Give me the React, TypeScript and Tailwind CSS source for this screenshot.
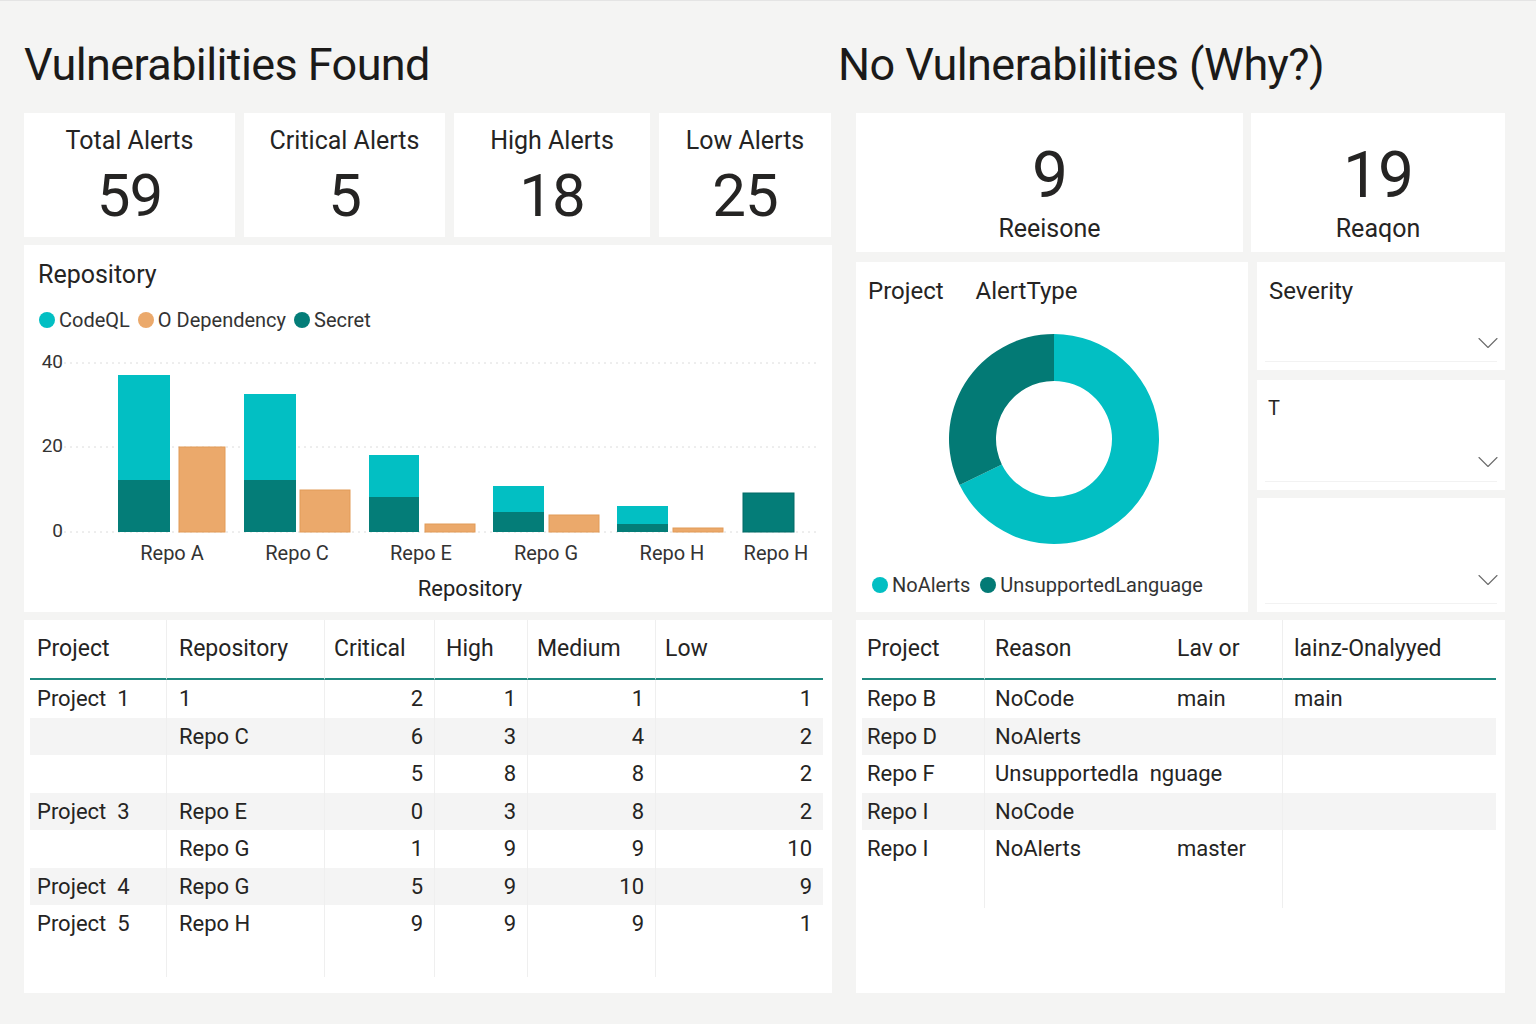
import { ChevronDown } from "lucide-react";

// ── Palette ─────────────────────────────────────────────────────────────────

const TEAL = "#02bfc3";
const DARK = "#047d78";
const ORANGE = "#eba96b";

// ── KPI cards ───────────────────────────────────────────────────────────────

function AlertCard({ label, value, width }: { label: string; value: string; width: string }) {
  return (
    <div className={`${width} bg-white flex flex-col items-center pt-[13px]`}>
      <span className="text-[25px] leading-[30px] text-[#252423]">{label}</span>
      <span className="text-[60px] leading-[64px] tracking-[-1px] text-[#252423] mt-[8px]">{value}</span>
    </div>
  );
}

function ReasonCard({ label, value, width }: { label: string; value: string; width: string }) {
  return (
    <div className={`${width} bg-white flex flex-col items-center pt-[29px]`}>
      <span className="text-[64px] leading-[68px] tracking-[-1px] text-[#252423]">{value}</span>
      <span className="text-[25px] leading-[30px] text-[#252423] mt-[4px]">{label}</span>
    </div>
  );
}

// ── Bar chart ───────────────────────────────────────────────────────────────

type Bar = {
  label: string;
  cx: number;
  teal?: { x: number; w: number; top: number; split: number };
  orange?: { x: number; w: number; top: number };
  dark?: { x: number; w: number; top: number };
};

const BASE = 185;

const bars: Bar[] = [
  { label: "Repo A", cx: 148, teal: { x: 94, w: 52, top: 28, split: 133 }, orange: { x: 155, w: 46, top: 100 } },
  { label: "Repo C", cx: 273, teal: { x: 220, w: 52, top: 47, split: 133 }, orange: { x: 276, w: 50, top: 143 } },
  { label: "Repo E", cx: 397, teal: { x: 345, w: 50, top: 108, split: 150 }, orange: { x: 401, w: 50, top: 177 } },
  { label: "Repo G", cx: 522, teal: { x: 469, w: 51, top: 139, split: 165 }, orange: { x: 525, w: 50, top: 168 } },
  { label: "Repo H", cx: 648, teal: { x: 593, w: 51, top: 159, split: 177 }, orange: { x: 649, w: 50, top: 181 } },
  { label: "Repo H", cx: 752, dark: { x: 719, w: 51, top: 146 } },
];

function RepoChart() {
  return (
    <svg width={808} height={262} className="block">
      {[
        { y: 16, t: "40" },
        { y: 100, t: "20" },
        { y: 185, t: "0" },
      ].map((g) => (
        <g key={g.t}>
          <line x1={34} x2={796} y1={g.y} y2={g.y} stroke="#dcdcdc" strokeDasharray="2 4" />
          <text x={39} y={g.y} textAnchor="end" dominantBaseline="middle" fontSize={19} fill="#333">
            {g.t}
          </text>
        </g>
      ))}
      {bars.map((b, i) => (
        <g key={i}>
          {b.teal && (
            <>
              <rect x={b.teal.x} y={b.teal.top} width={b.teal.w} height={b.teal.split - b.teal.top} fill={TEAL} />
              <rect x={b.teal.x} y={b.teal.split} width={b.teal.w} height={BASE - b.teal.split} fill={DARK} />
            </>
          )}
          {b.orange && (
            <rect
              x={b.orange.x}
              y={b.orange.top}
              width={b.orange.w}
              height={BASE - b.orange.top}
              fill={ORANGE}
              stroke="#e29b58"
              strokeWidth={1}
            />
          )}
          {b.dark && (
            <rect x={b.dark.x} y={b.dark.top} width={b.dark.w} height={BASE - b.dark.top} fill={DARK} stroke="#036b67" />
          )}
          <text x={b.cx} y={208} textAnchor="middle" dominantBaseline="middle" fontSize={20} fill="#333">
            {b.label}
          </text>
        </g>
      ))}
      <text x={446} y={243} textAnchor="middle" dominantBaseline="middle" fontSize={22} fill="#222">
        Repository
      </text>
    </svg>
  );
}

// ── Donut ───────────────────────────────────────────────────────────────────

function arc(cx: number, cy: number, r0: number, r1: number, a0: number, a1: number) {
  const rad = (a: number) => (a * Math.PI) / 180;
  const p = (a: number, r: number) => [cx + r * Math.sin(rad(a)), cy - r * Math.cos(rad(a))];
  const large = a1 - a0 > 180 ? 1 : 0;
  const [x0, y0] = p(a0, r1);
  const [x1, y1] = p(a1, r1);
  const [x2, y2] = p(a1, r0);
  const [x3, y3] = p(a0, r0);
  return `M${x0} ${y0} A${r1} ${r1} 0 ${large} 1 ${x1} ${y1} L${x2} ${y2} A${r0} ${r0} 0 ${large} 0 ${x3} ${y3} Z`;
}

function Donut() {
  return (
    <svg width={392} height={240} className="block">
      <path d={arc(198, 117, 58, 105, 0, 244)} fill={TEAL} />
      <path d={arc(198, 117, 58, 105, 244, 360)} fill="#037a75" />
    </svg>
  );
}

// ── Slicer ──────────────────────────────────────────────────────────────────

function Slicer({ title, height, small, chevronBottom }: { title?: string; height: string; small?: boolean; chevronBottom: string }) {
  return (
    <div className={`${height} bg-white relative`}>
      {title && (
        <div className={small ? "pl-[11px] pt-[16px] text-[20px] leading-[24px] text-[#252423]" : "pl-[12px] pt-[14px] text-[24px] leading-[30px] text-[#252423]"}>
          {title}
        </div>
      )}
      <ChevronDown className={`absolute right-[-1px] ${chevronBottom} w-[36px] h-[36px] text-[#6b6b6b]`} strokeWidth={0.75} />
      <div className="absolute left-[8px] right-[8px] bottom-[8px] h-px bg-[#f2f2f2]" />
    </div>
  );
}

// ── Tables ──────────────────────────────────────────────────────────────────

const alertRows: (string | number)[][] = [
  ["Project  1", "1", 2, 1, 1, 1],
  ["", "Repo C", 6, 3, 4, 2],
  ["", "", 5, 8, 8, 2],
  ["Project  3", "Repo E", 0, 3, 8, 2],
  ["", "Repo G", 1, 9, 9, 10],
  ["Project  4", "Repo G", 5, 9, 10, 9],
  ["Project  5", "Repo H", 9, 9, 9, 1],
];

const alertHeaders = ["Project", "Repository", "Critical", "High", "Medium", "Low"];
const headerPad = ["pl-[7px]", "pl-[12px]", "pl-[9px]", "pl-[11px]", "pl-[9px]", "pl-[9px]"];

function AlertTable() {
  const divider = (c: number) => (c < 5 ? "border-r border-[#efefef]" : "");
  return (
    <div className="grid grid-cols-[137px_158px_110px_93px_128px_167px] text-[#252423]">
      {alertHeaders.map((h, c) => (
        <div key={h} className={`h-[60px] flex items-center text-[23px] border-b-2 border-b-[#1f8a80] ${headerPad[c]} ${divider(c)}`}>
          {h}
        </div>
      ))}
      {alertRows.map((row, r) =>
        row.map((v, c) => (
          <div
            key={`${r}-${c}`}
            className={`h-[37.5px] flex items-center text-[22px] whitespace-pre ${r % 2 === 1 ? "bg-[#f4f4f4]" : ""} ${
              c < 2 ? headerPad[c] : "justify-end pr-[11px]"
            } ${divider(c)}`}
          >
            {v}
          </div>
        )),
      )}
      {alertHeaders.map((h, c) => (
        <div key={`f-${h}`} className={`h-[34px] ${divider(c)}`} />
      ))}
    </div>
  );
}

function ReasonTable() {
  const cell = "h-[37.5px] flex items-center text-[22px] whitespace-pre";
  const rows = [
    ["Repo B", "NoCode", "main", "main"],
    ["Repo D", "NoAlerts", "", ""],
    ["Repo F", "Unsupportedla  nguage", null, ""],
    ["Repo I", "NoCode", "", ""],
    ["Repo I", "NoAlerts", "master", ""],
  ];
  return (
    <div className="grid grid-cols-[123px_182px_116px_213px] text-[#252423]">
      <div className="h-[60px] flex items-center text-[23px] pl-[5px] border-b-2 border-b-[#1f8a80] border-r border-r-[#efefef]">Project</div>
      <div className="h-[60px] flex items-center text-[23px] pl-[10px] border-b-2 border-b-[#1f8a80]">Reason</div>
      <div className="h-[60px] flex items-center text-[23px] pl-[10px] border-b-2 border-b-[#1f8a80] border-r border-r-[#efefef]">Lav or</div>
      <div className="h-[60px] flex items-center text-[23px] pl-[11px] border-b-2 border-b-[#1f8a80]">lainz-Onalyyed</div>
      {rows.map((row, r) => {
        const bg = r % 2 === 1 ? "bg-[#f4f4f4]" : "";
        return (
          <div key={r} className="contents">
            <div className={`${cell} ${bg} pl-[5px] border-r border-[#efefef]`}>{row[0]}</div>
            {row[2] === null ? (
              <div className={`${cell} ${bg} pl-[10px] col-span-2 border-r border-[#efefef]`}>{row[1]}</div>
            ) : (
              <>
                <div className={`${cell} ${bg} pl-[10px]`}>{row[1]}</div>
                <div className={`${cell} ${bg} pl-[10px] border-r border-[#efefef]`}>{row[2]}</div>
              </>
            )}
            <div className={`${cell} ${bg} pl-[11px]`}>{row[3]}</div>
          </div>
        );
      })}
      <div className="h-[40px] border-r border-[#efefef]" />
      <div className="h-[40px]" />
      <div className="h-[40px] border-r border-[#efefef]" />
      <div className="h-[40px]" />
    </div>
  );
}

// ── Page ────────────────────────────────────────────────────────────────────

export default function App() {
  return (
    <div className="w-[1536px] h-[1024px] bg-[#f4f4f3] font-[Roboto,sans-serif] border-t border-[#e4e4e4] flex gap-[24px] pl-[24px] text-[#252423]">
      {/* Left: vulnerabilities found */}
      <div className="w-[808px] flex flex-col">
        <div className="h-[112px] pt-[37px]">
          <h1 className="text-[45px] leading-[54px] tracking-[-0.6px] text-[#1b1a19]">Vulnerabilities Found</h1>
        </div>
        <div className="h-[124px] flex gap-[9px]">
          <AlertCard label="Total Alerts" value="59" width="w-[211px]" />
          <AlertCard label="Critical Alerts" value="5" width="w-[201px]" />
          <AlertCard label="High Alerts" value="18" width="w-[196px]" />
          <AlertCard label="Low Alerts" value="25" width="w-[172px]" />
        </div>

        <div className="mt-[8px] h-[367px] bg-white flex flex-col">
          <div className="pl-[14px] pt-[14px] text-[25px] leading-[32px]">Repository</div>
          <div className="pl-[15px] mt-[16px] flex items-center gap-[8px] text-[20px] leading-[26px] text-[#333]">
            <span className="flex items-center gap-[4px]">
              <span className="w-[16px] h-[16px] rounded-full bg-[#02bfc3]" />
              CodeQL
            </span>
            <span className="flex items-center gap-[4px]">
              <span className="w-[16px] h-[16px] rounded-full bg-[#eba96b]" />
              O Dependency
            </span>
            <span className="flex items-center gap-[4px]">
              <span className="w-[16px] h-[16px] rounded-full bg-[#047d78]" />
              Secret
            </span>
          </div>
          <div className="mt-[14px]">
            <RepoChart />
          </div>
        </div>

        <div className="mt-[8px] h-[373px] bg-white pl-[6px] pt-0">
          <AlertTable />
        </div>
      </div>

      {/* Right: no vulnerabilities */}
      <div className="w-[649px] flex flex-col">
        <div className="h-[112px] pt-[37px] -ml-[18px]">
          <h1 className="text-[45px] leading-[54px] tracking-[-0.6px] text-[#1b1a19]">No Vulnerabilities (Why?)</h1>
        </div>
        <div className="h-[139px] flex gap-[8px]">
          <ReasonCard label="Reeisone" value="9" width="w-[387px]" />
          <ReasonCard label="Reaqon" value="19" width="w-[254px]" />
        </div>

        <div className="mt-[10px] h-[350px] flex gap-[9px]">
          <div className="w-[392px] bg-white flex flex-col">
            <div className="pl-[12px] pt-[14px] flex gap-[32px] text-[24px] leading-[30px]">
              <span>Project</span>
              <span>AlertType</span>
            </div>
            <div className="mt-[16px]">
              <Donut />
            </div>
            <div className="pl-[16px] mt-[10px] flex items-center gap-[10px] text-[20px] leading-[26px] text-[#333]">
              <span className="flex items-center gap-[4px]">
                <span className="w-[16px] h-[16px] rounded-full bg-[#02bfc3]" />
                NoAlerts
              </span>
              <span className="flex items-center gap-[4px]">
                <span className="w-[16px] h-[16px] rounded-full bg-[#037a75]" />
                UnsupportedLanguage
              </span>
            </div>
          </div>
          <div className="w-[248px] flex flex-col">
            <Slicer title="Severity" height="h-[108px]" chevronBottom="bottom-[9px]" />
            <div className="h-[10px]" />
            <Slicer title="T" small height="h-[110px]" chevronBottom="bottom-[10px]" />
            <div className="h-[8px]" />
            <Slicer height="h-[114px]" chevronBottom="bottom-[14px]" />
          </div>
        </div>

        <div className="mt-[8px] h-[373px] bg-white pl-[6px]">
          <ReasonTable />
        </div>
      </div>
    </div>
  );
}
